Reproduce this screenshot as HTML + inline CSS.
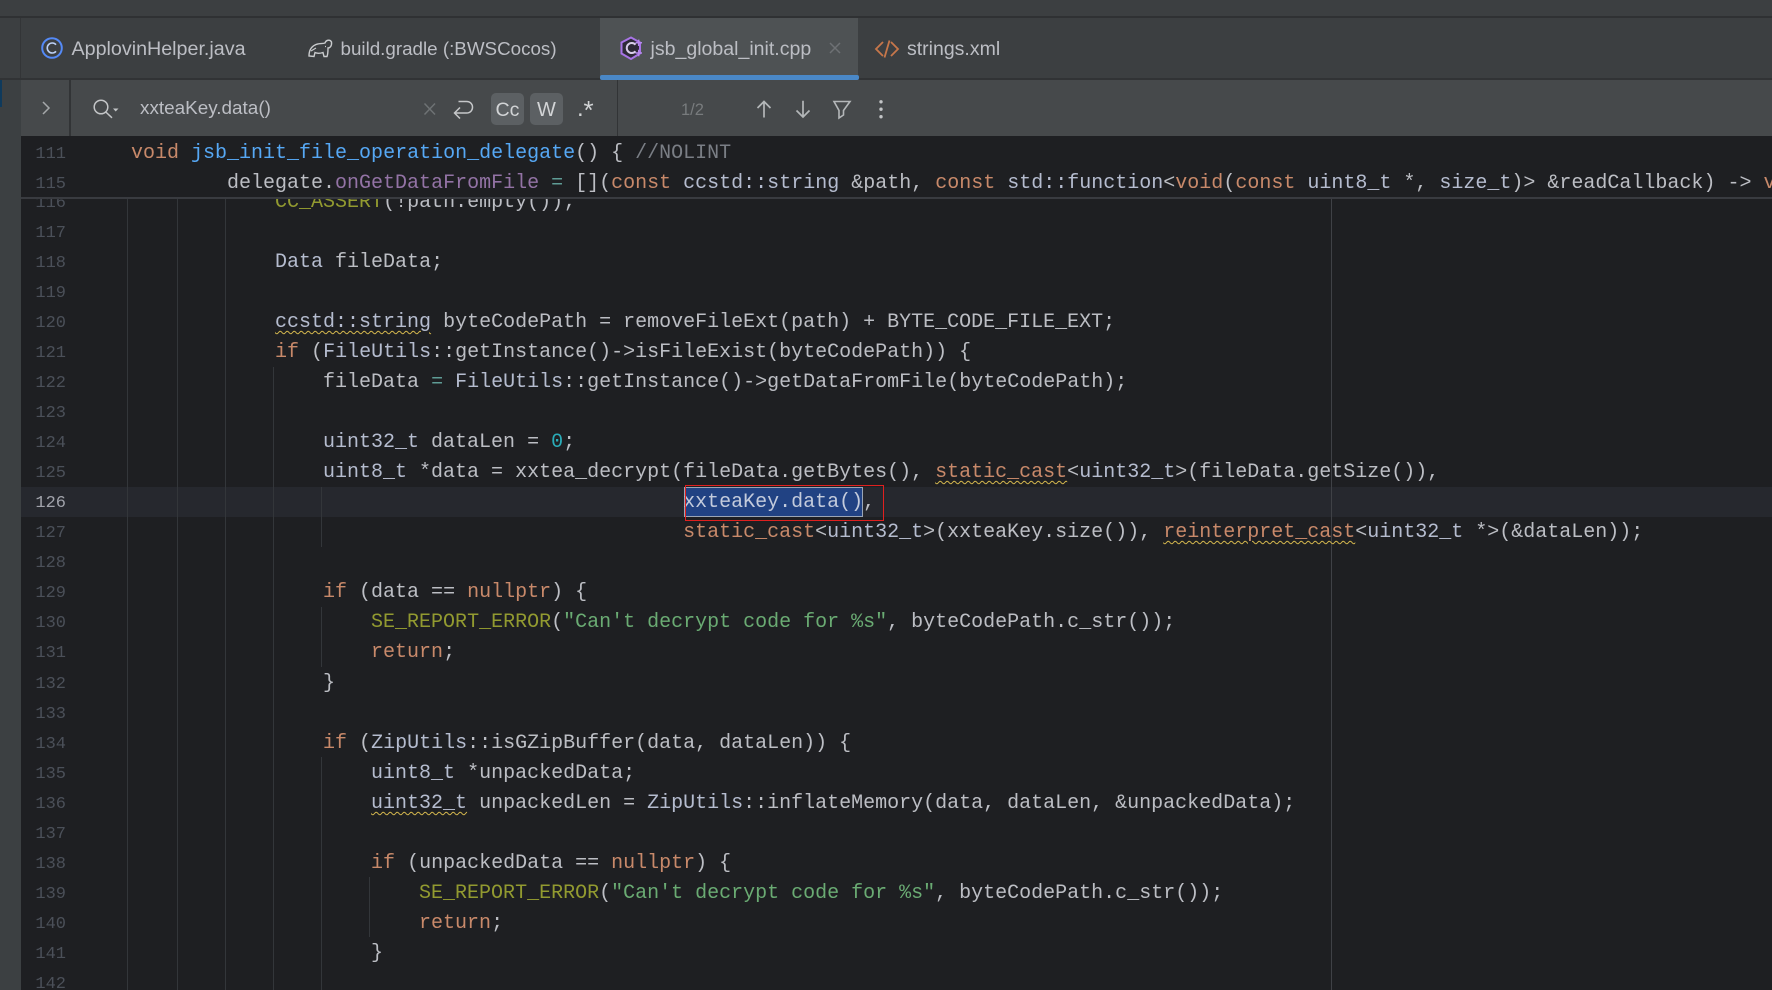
<!DOCTYPE html>
<html lang="en">
<head>
<meta charset="utf-8">
<title>jsb_global_init.cpp</title>
<style>
html,body{margin:0;padding:0;width:1772px;height:990px;overflow:hidden;background:#1e1f22}
body{position:relative;font-family:"Liberation Sans",sans-serif}
.a{position:absolute}
.tab{position:absolute;top:37.5px;height:22px;line-height:22px;font-size:19.3px;color:#bcbec4;white-space:nowrap}
#code,#nums,.sticky{font-family:"Liberation Mono",monospace;white-space:pre}
#code{position:absolute;left:131px;top:187.5px;font-size:20px;line-height:30.07px;color:#bcbec4}
#code div,.sticky div{height:30.07px}
#nums{position:absolute;left:21px;width:45px;top:188.5px;font-size:17px;line-height:30.07px;color:#4b5059;text-align:right}
#nums div{height:30.07px}
.sticky{position:absolute;left:131px;font-size:20px;line-height:30px;color:#bcbec4}
.snum{position:absolute;left:21px;width:45px;font-family:"Liberation Mono",monospace;font-size:17px;line-height:30px;color:#4b5059;text-align:right}
.k{color:#c8896a}.f{color:#56a8f5}.c{color:#b5bccf}.o{color:#5f9c96}.m{color:#929a30}.s{color:#6aab73}.n{color:#2aacb8}.d{color:#7a7e85}.p{color:#9373a5}
.w{text-decoration:underline wavy #d6b84e 1px;text-underline-offset:3px}
.g{position:absolute;width:1px;background:#33363a}
</style>
</head>
<body>
<!-- top chrome -->
<div class="a" style="left:0;top:0;width:1772px;height:80px;background:#3c3f41"></div>
<div class="a" style="left:0;top:16px;width:1772px;height:2px;background:#2f3133"></div>
<div class="a" style="left:0;top:80px;width:21px;height:910px;background:#3c4042"></div>
<div class="a" style="left:20px;top:18px;width:1px;height:60px;background:#333537"></div>
<div class="a" style="left:0;top:80px;width:2px;height:27px;background:#0f3a5c"></div>
<!-- active tab -->
<div class="a" style="left:600px;top:18px;width:258px;height:58px;background:#4e5254"></div>
<div class="a" style="left:0;top:78px;width:1772px;height:2px;background:#313335"></div>
<div class="a" style="left:600px;top:75px;width:259px;height:4.5px;background:#4a88c7;border-radius:2px"></div>

<!-- tab icons -->
<svg class="a" style="left:0;top:18px" width="1020" height="60" viewBox="0 18 1020 60" fill="none">
  <circle cx="52" cy="48" r="9.8" stroke="#548af7" stroke-width="2"/>
  <path d="M56 44.7A5 5 0 1 0 56 51.3" stroke="#bcd0f5" stroke-width="1.6"/>
  <g transform="translate(0,1)">
  <path d="M309 55C309 50 311 46 315 44C318 42 322 43 325 42C326 39 330 38 331.500 41C332 45 330 47 328 47C328 50 328 53 327 55.500L324 55.500L323 51.500C320 52.500 317 52.500 315 51.500L314 55.500Z" stroke="#c9cbcd" stroke-width="1.400"/>
  <path d="M311 50L316 47M325 45.500L326 45.500" stroke="#c9cbcd" stroke-width="1.200"/>
  </g>
  <path d="M631 37.500L640 42.500V53.500L631 59L621.500 53.500V42.500Z" fill="#2e2a38" stroke="#a874e6" stroke-width="2"/>
  <path d="M635.500 44.700A5 5 0 1 0 635.500 51.300" stroke="#d8cdea" stroke-width="2"/>
  <path d="M635.500 42.800H642M638.700 39.600V46M635.500 53H642M638.700 49.800V56.200" stroke="#b688ee" stroke-width="1.500"/>
  <path d="M830 43L840 53M840 43L830 53" stroke="#6e7174" stroke-width="1.500"/>
  <g transform="translate(0,1)">
  <path d="M883 41L876 48L883 55M891 41L898 48L891 55" stroke="#c7774a" stroke-width="1.800"/>
  <path d="M889.500 39.500L884.500 56.500" stroke="#c7774a" stroke-width="1.800"/>
  </g>
</svg>
<div class="tab" style="left:71.500px;font-size:19.700px">ApplovinHelper.java</div>
<div class="tab" style="left:340.500px;font-size:18.800px">build.gradle (:BWSCocos)</div>
<div class="tab" style="left:650.500px;font-size:19.550px">jsb_global_init.cpp</div>
<div class="tab" style="left:907px;font-size:19.500px">strings.xml</div>

<!-- find bar -->
<div class="a" style="left:21px;top:80px;width:1751px;height:56px;background:#46494b"></div>
<div class="a" style="left:69px;top:80px;width:1.500px;height:56px;background:#323436"></div>
<div class="a" style="left:617px;top:80px;width:1px;height:56px;background:#323436"></div>
<div class="a" style="left:491px;top:92.500px;width:33px;height:32.500px;background:#5c6063;border-radius:5px"></div>
<div class="a" style="left:530px;top:92.500px;width:33px;height:32.500px;background:#5c6063;border-radius:5px"></div>
<svg class="a" style="left:0;top:80px" width="900" height="56" viewBox="0 80 900 56" fill="none">
  <path d="M43 102L49 108L43 114" stroke="#a5a8aa" stroke-width="1.500"/>
  <circle cx="101" cy="107" r="6.800" stroke="#c3c5c7" stroke-width="1.500"/>
  <path d="M105.800 112L112 117.800" stroke="#c3c5c7" stroke-width="1.500"/>
  <path d="M113 108.500H118.500L115.700 111.500Z" fill="#c3c5c7"/>
  <path d="M424.500 103.500L435 114.500M435 103.500L424.500 114.500" stroke="#6e7274" stroke-width="1.500"/>
  <path d="M458.500 101.500H466.500C474.500 101.500 474.500 113 466.500 113H454.500M460 107.500L454.500 113L460 118.500" stroke="#c5c7c9" stroke-width="1.500"/>
  <path d="M764 117.500V101.500M757.500 108L764 101.500L770.500 108M803 100.800V117M796.500 110.500L803 117L809.500 110.500" stroke="#b4b7b9" stroke-width="1.700"/>
  <path d="M834 101.500H850L843.500 110.500V115L839 118V110.500Z" stroke="#b4b7b9" stroke-width="1.600"/>
  <circle cx="881" cy="101.800" r="1.700" fill="#c3c5c7"/><circle cx="881" cy="109.200" r="1.700" fill="#c3c5c7"/><circle cx="881" cy="116.700" r="1.700" fill="#c3c5c7"/>
</svg>
<div class="a" style="left:140px;top:98px;line-height:22px;font-size:18.900px;color:#bcbec4;white-space:nowrap">xxteaKey.data()</div>
<div class="a" style="left:491px;top:92.500px;width:33px;text-align:center;line-height:34px;font-size:19.600px;color:#d2d4d6">Cc</div>
<div class="a" style="left:530px;top:92.500px;width:33px;text-align:center;line-height:34px;font-size:20px;color:#d2d4d6">W</div>
<div class="a" style="left:577px;top:97px;line-height:24px;font-size:24px;color:#d2d4d6;white-space:pre">.</div>
<div class="a" style="left:583.500px;top:97px;line-height:26px;font-size:26px;color:#d2d4d6;white-space:pre">*</div>
<div class="a" style="left:681px;top:99px;line-height:22px;font-size:16.500px;color:#787b7d">1/2</div>

<!-- editor -->
<div class="a" style="left:21px;top:136px;width:1751px;height:854px;background:#1e1f22"></div>
<div class="a" style="left:21px;top:487px;width:1751px;height:30px;background:#26282e"></div>

<div class="g" style="left:127px;top:198px;height:792px"></div>
<div class="g" style="left:177px;top:198px;height:792px"></div>
<div class="g" style="left:225px;top:198px;height:792px"></div>
<div class="g" style="left:273px;top:367px;height:623px"></div>
<div class="g" style="left:321px;top:487px;height:60px"></div>
<div class="g" style="left:321px;top:607px;height:60px"></div>
<div class="g" style="left:321px;top:757px;height:233px"></div>
<div class="g" style="left:369px;top:877px;height:60px"></div>
<div class="g" style="left:1331px;top:198px;height:792px;background:#3f4146"></div>

<!-- selection -->
<div class="a" style="left:683.500px;top:487px;width:179px;height:29.500px;box-sizing:border-box;background:#214283;border:1px solid #9aa5b5"></div>

<div id="nums"><div>116</div><div>117</div><div>118</div><div>119</div><div>120</div><div>121</div><div>122</div><div>123</div><div>124</div><div>125</div><div style="color:#a1a3ab">126</div><div>127</div><div>128</div><div>129</div><div>130</div><div>131</div><div>132</div><div>133</div><div>134</div><div>135</div><div>136</div><div>137</div><div>138</div><div>139</div><div>140</div><div>141</div><div>142</div></div>

<div id="code"><div>            <span class="m">CC_ASSERT</span>(!path.empty());</div><div> </div><div>            <span class="c">Data</span> fileData;</div><div> </div><div>            <span class="c w">ccstd::string</span> byteCodePath = removeFileExt(path) + BYTE_CODE_FILE_EXT;</div><div>            <span class="k">if</span> (<span class="c">FileUtils</span>::getInstance()-&gt;isFileExist(byteCodePath)) {</div><div>                fileData <span class="o">=</span> <span class="c">FileUtils</span>::getInstance()-&gt;getDataFromFile(byteCodePath);</div><div> </div><div>                <span class="c">uint32_t</span> dataLen = <span class="n">0</span>;</div><div>                <span class="c">uint8_t</span> *data = xxtea_decrypt(fileData.getBytes(), <span class="k w">static_cast</span>&lt;<span class="c">uint32_t</span>&gt;(fileData.getSize()),</div><div>                                              <span style="color:#c3cbdc">xxteaKey.data()</span>,</div><div>                                              <span class="k">static_cast</span>&lt;<span class="c">uint32_t</span>&gt;(xxteaKey.size()), <span class="k w">reinterpret_cast</span>&lt;<span class="c">uint32_t</span> *&gt;(&amp;dataLen));</div><div> </div><div>                <span class="k">if</span> (data == <span class="k">nullptr</span>) {</div><div>                    <span class="m">SE_REPORT_ERROR</span>(<span class="s">"Can't decrypt code for %s"</span>, byteCodePath.c_str());</div><div>                    <span class="k">return</span>;</div><div>                }</div><div> </div><div>                <span class="k">if</span> (<span class="c">ZipUtils</span>::isGZipBuffer(data, dataLen)) {</div><div>                    <span class="c">uint8_t</span> *unpackedData;</div><div>                    <span class="c w">uint32_t</span> unpackedLen = <span class="c">ZipUtils</span>::inflateMemory(data, dataLen, &amp;unpackedData);</div><div> </div><div>                    <span class="k">if</span> (unpackedData == <span class="k">nullptr</span>) {</div><div>                        <span class="m">SE_REPORT_ERROR</span>(<span class="s">"Can't decrypt code for %s"</span>, byteCodePath.c_str());</div><div>                        <span class="k">return</span>;</div><div>                    }</div><div> </div></div>

<!-- red annotation -->
<div class="a" style="left:685px;top:485px;width:199px;height:36px;box-sizing:border-box;border:1.500px solid #e0201f"></div>

<!-- sticky header -->
<div class="a" style="left:21px;top:136px;width:1751px;height:61px;background:#1e1f22"></div>
<div class="a" style="left:21px;top:197px;width:1751px;height:2px;background:#393b40"></div>
<div class="snum" style="top:139.500px">111</div>
<div class="snum" style="top:169.500px">115</div>
<div class="sticky" style="top:138.500px"><span class="k">void</span> <span class="f">jsb_init_file_operation_delegate</span>() { <span class="d">//NOLINT</span></div>
<div class="sticky" style="top:168.500px;width:1641px;overflow:hidden">        delegate.<span class="p">onGetDataFromFile</span> <span class="o">=</span> [](<span class="k">const</span> <span class="c">ccstd::string</span> &amp;path, <span class="k">const</span> <span class="c">std::function</span>&lt;<span class="k">void</span>(<span class="k">const</span> <span class="c">uint8_t</span> *, <span class="c">size_t</span>)&gt; &amp;readCallback) -&gt; <span class="k">void</span></div>
</body>
</html>
